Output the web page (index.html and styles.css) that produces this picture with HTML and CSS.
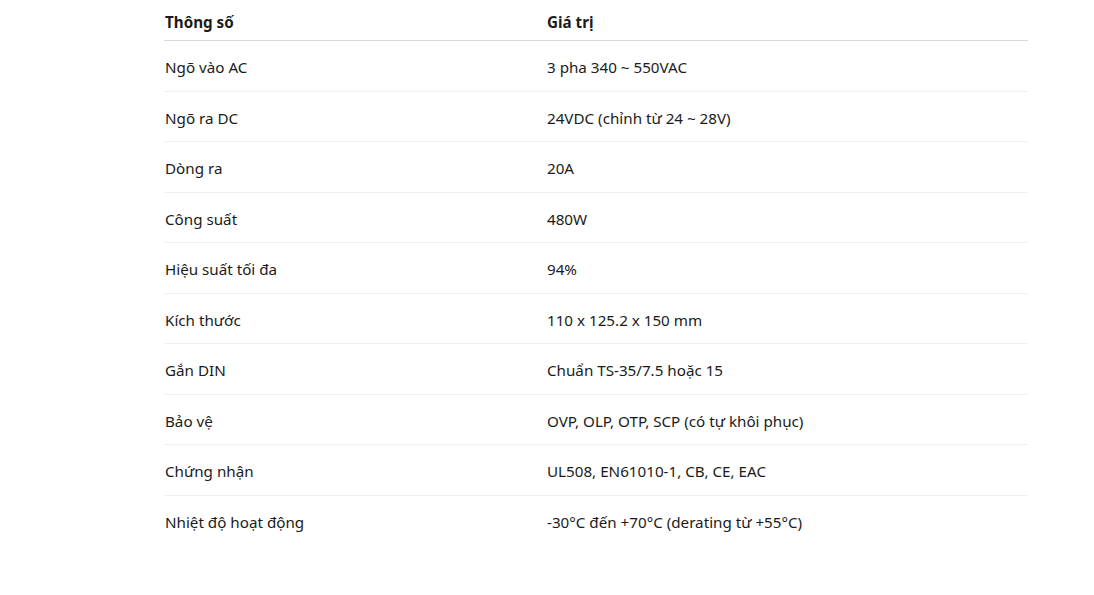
FILE: index.html
```html
<!DOCTYPE html>
<html lang="vi">
<head>
<meta charset="utf-8">
<title>Thông số</title>
<link rel="stylesheet" href="styles.css">
</head>
<body>
<div class="wrap">
  <table class="specs">
    <thead>
      <tr><th>Thông số</th><th>Giá trị</th></tr>
    </thead>
    <tbody>
      <tr><td>Ngõ vào AC</td><td>3 pha 340 ~ 550VAC</td></tr>
      <tr><td>Ngõ ra DC</td><td>24VDC (chỉnh từ 24 ~ 28V)</td></tr>
      <tr><td>Dòng ra</td><td>20A</td></tr>
      <tr><td>Công suất</td><td>480W</td></tr>
      <tr><td>Hiệu suất tối đa</td><td>94%</td></tr>
      <tr><td>Kích thước</td><td>110 x 125.2 x 150 mm</td></tr>
      <tr><td>Gắn DIN</td><td>Chuẩn TS-35/7.5 hoặc 15</td></tr>
      <tr><td>Bảo vệ</td><td>OVP, OLP, OTP, SCP (có tự khôi phục)</td></tr>
      <tr><td>Chứng nhận</td><td>UL508, EN61010-1, CB, CE, EAC</td></tr>
      <tr><td>Nhiệt độ hoạt động</td><td>-30°C đến +70°C (derating từ +55°C)</td></tr>
    </tbody>
  </table>
</div>
</body>
</html>
```
FILE: styles.css
```css
html, body {
  margin: 0;
  padding: 0;
  background: #ffffff;
}
body {
  font-family: "Noto Sans", "Open Sans", sans-serif;
  color: #1b1b1b;
  font-size: 15.2px;
}
.wrap {
  padding-left: 164px;
  width: 864px;
}
.specs {
  width: 864px;
  border-collapse: collapse;
  table-layout: fixed;
}
.specs th, .specs td {
  text-align: left;
  padding: 0;
  vertical-align: middle;
}
.specs th:first-child, .specs td:first-child {
  width: 383px;
  padding-left: 1px;
}
.specs th {
  font-weight: 700;
  height: 40.5px;
  padding-top: 4px;
  box-sizing: border-box;
  border-bottom: 1px solid #d9d9d9;
}
.specs td {
  height: 50.5px;
  padding-top: 3px;
  box-sizing: border-box;
  border-bottom: 1px solid #efefef;
}
.specs tbody tr:last-child td {
  border-bottom: none;
}
```
